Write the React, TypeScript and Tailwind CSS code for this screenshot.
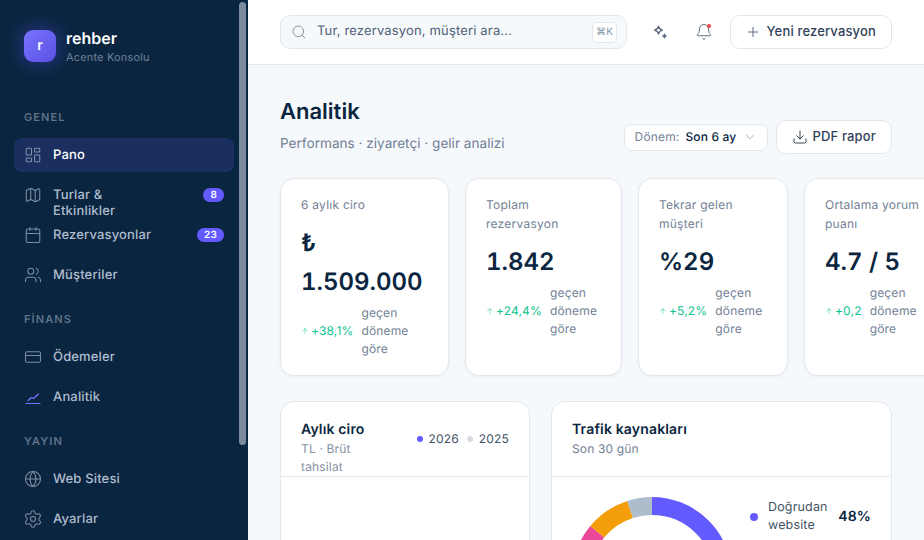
import React from "react";
import {
  LayoutDashboard,
  Map,
  Calendar,
  Users,
  CreditCard,
  Globe,
  Settings,
  Search,
  Bell,
  Plus,
  Download,
  ChevronDown,
  ArrowUp,
} from "lucide-react";

type NavItem = {
  label: string;
  icon: React.ReactNode;
  badge?: string;
  active?: boolean;
};

const iconClass = "w-[18px] h-[18px] shrink-0 text-[#7d8ea3]";

const AnalyticsIcon: React.FC = () => (
  <svg className="w-[18px] h-[18px] shrink-0 text-[#7a73ff]" viewBox="0 0 18 18" fill="none" stroke="currentColor" strokeWidth="1.2" strokeLinecap="round" strokeLinejoin="round">
    <path d="M2 15.5h14" />
    <path d="M4 12.5 7.5 9.5l2 1 5-4.5" />
  </svg>
);

const SparkIcon: React.FC = () => (
  <svg className="w-4 h-4 text-[#5b6b80]" viewBox="0 0 16 16" fill="none" stroke="currentColor" strokeWidth="1.2" strokeLinejoin="round">
    <path d="M6.5 2.2c.5 2.6 1.4 3.5 4 4-2.6.5-3.5 1.4-4 4-.5-2.6-1.4-3.5-4-4 2.6-.5 3.5-1.4 4-4Z" />
    <path d="M12.5 10.2c.2 1.2.6 1.6 1.8 1.8-1.2.2-1.6.6-1.8 1.8-.2-1.2-.6-1.6-1.8-1.8 1.2-.2 1.6-.6 1.8-1.8Z" fill="currentColor" />
  </svg>
);

const sections: { title: string; items: NavItem[] }[] = [
  {
    title: "GENEL",
    items: [
      { label: "Pano", icon: <LayoutDashboard className={iconClass} strokeWidth={1.4} />, active: true },
      { label: "Turlar & Etkinlikler", icon: <Map className={iconClass} strokeWidth={1.4} />, badge: "8" },
      { label: "Rezervasyonlar", icon: <Calendar className={iconClass} strokeWidth={1.4} />, badge: "23" },
      { label: "Müşteriler", icon: <Users className={iconClass} strokeWidth={1.4} /> },
    ],
  },
  {
    title: "FİNANS",
    items: [
      { label: "Ödemeler", icon: <CreditCard className={iconClass} strokeWidth={1.4} /> },
      { label: "Analitik", icon: <AnalyticsIcon /> },
    ],
  },
  {
    title: "YAYIN",
    items: [
      { label: "Web Sitesi", icon: <Globe className={iconClass} strokeWidth={1.4} /> },
      { label: "Ayarlar", icon: <Settings className="w-5 h-5 -mx-px shrink-0 text-[#7d8ea3]" strokeWidth={1.3} /> },
    ],
  },
];

const kpis = [
  { label: "6 aylık ciro", value: "₺ 1.509.000", delta: "+38,1%", width: "w-[169px]" },
  { label: "Toplam rezervasyon", value: "1.842", delta: "+24,4%", width: "w-[157px]" },
  { label: "Tekrar gelen müşteri", value: "%29", delta: "+5,2%", width: "w-[150px]" },
  { label: "Ortalama yorum puanı", value: "4.7 / 5", delta: "+0,2", width: "w-[150px]" },
];

const Sidebar: React.FC = () => (
  <aside className="relative w-[248px] h-full shrink-0 overflow-hidden bg-[#0a2540] px-[14px]">
    <div className="flex items-start gap-[10px] pl-[10px] pt-[30px]">
      <div className="w-8 h-8 rounded-[9px] bg-gradient-to-br from-[#7a73ff] to-[#5a50e0] flex items-center justify-center text-white text-sm font-semibold shadow-[0_0_16px_4px_rgba(99,91,255,0.28)]">
        r
      </div>
      <div className="-mt-[2px]">
        <div className="text-white text-base font-semibold leading-5 tracking-normal">rehber</div>
        <div className="text-[#6f8198] text-[11px] leading-4 mt-px">Acente Konsolu</div>
      </div>
    </div>
    <nav className="mt-[44px]">
      {sections.map((section, i) => (
        <div key={section.title} className={i === 0 ? "" : "mt-[19px]"}>
          <div className="h-4 pl-[10px] mb-[13px] text-[11px] leading-4 font-semibold tracking-[0.1em] text-[#5f7287]">
            {section.title}
          </div>
          <div className="flex flex-col gap-[6px]">
            {section.items.map((item) => (
              <div
                key={item.label}
                className={`h-[34px] w-[220px] rounded-lg pl-[10px] pr-[10px] flex items-center gap-[11px] text-[13px] font-medium ${
                  item.active ? "bg-[#1a2f5f] text-white" : "text-[#aebccd]"
                }`}
              >
                {item.icon}
                <span className="h-4 leading-4 w-[110px] mr-auto">{item.label}</span>
                {item.badge && (
                  <span className="h-[14px] px-[7px] rounded-full bg-[#635bff] text-white text-[10px] leading-[14px] font-semibold">
                    {item.badge}
                  </span>
                )}
              </div>
            ))}
          </div>
        </div>
      ))}
    </nav>
    {/* scrollbar thumb */}
    <div className="absolute right-[2px] top-[2px] w-[7px] h-[443px] rounded-full bg-[#7b8b9d]" />
  </aside>
);

const TopBar: React.FC = () => (
  <header className="h-[65px] shrink-0 bg-white border-b border-[#e3e8ee] px-8 flex items-center justify-between">
    <div className="w-[347px] h-[34px] rounded-[10px] bg-[#f6f9fc] border border-[#e3e8ee] pl-[10px] pr-[9px] flex items-center">
      <Search className="w-4 h-4 text-[#8792a2]" strokeWidth={1.5} />
      <span className="ml-[10px] text-[13px] text-[#4f5f75]">Tur, rezervasyon, müşteri ara...</span>
      <span className="ml-auto w-[25px] h-[21px] rounded-[4px] bg-white border border-[#e3e8ee] text-[10px] leading-[19px] text-center text-[#8792a2] whitespace-nowrap">
        ⌘K
      </span>
    </div>
    <div className="flex items-center gap-2">
      <div className="w-9 h-[34px] flex items-center justify-center">
        <SparkIcon />
      </div>
      <div className="relative w-9 h-[34px] flex items-center justify-center">
        <Bell className="w-[18px] h-[18px] text-[#5b6b80]" strokeWidth={1.3} />
        <span className="absolute right-[11px] top-[9px] w-[4px] h-[4px] rounded-full bg-[#ef4444]" />
      </div>
      <button className="h-[34px] pl-[14px] pr-[15px] rounded-[10px] bg-white border border-[#e3e8ee] flex items-center gap-[6px] text-[13px] font-medium text-[#32425a]">
        <Plus className="w-4 h-4 text-[#5b6b80]" strokeWidth={1.5} />
        Yeni rezervasyon
      </button>
    </div>
  </header>
);

const KpiCard: React.FC<(typeof kpis)[number]> = ({ label, value, delta, width }) => (
  <div className={`${width} h-[198px] shrink-0 bg-white border border-[#e3e8ee] rounded-[14px] shadow-[0_1px_3px_rgba(10,37,64,0.06)] px-5 py-4`}>
    <div className="text-xs leading-[19px] text-[#727f94] tracking-[0.02em]">{label}</div>
    <div className="mt-[9px] text-2xl leading-[39px] font-semibold tabular-nums tracking-normal text-[#0a2540]">{value}</div>
    <div className="mt-[3px] flex items-center gap-2 text-xs leading-[18px]">
      <span className="flex items-center gap-[2px] text-[#0cc48f] whitespace-nowrap">
        <ArrowUp className="w-2 h-2" strokeWidth={1.5} />
        {delta}
      </span>
      <span className="text-[#727f94] w-[50px]">geçen döneme göre</span>
    </div>
  </div>
);

const Donut: React.FC = () => (
  <svg className="w-40 h-40 shrink-0" viewBox="0 0 160 160">
    <g fill="none" strokeWidth="18" transform="rotate(-90 80 80)">
      <circle cx="80" cy="80" r="71" stroke="#635bff" pathLength={100} strokeDasharray="48 52" />
      <circle cx="80" cy="80" r="71" stroke="#0cc48f" pathLength={100} strokeDasharray="20 80" strokeDashoffset={-48} />
      <circle cx="80" cy="80" r="71" stroke="#ec4899" pathLength={100} strokeDasharray="18 82" strokeDashoffset={-68} />
      <circle cx="80" cy="80" r="71" stroke="#f59e0b" pathLength={100} strokeDasharray="9 91" strokeDashoffset={-86} />
      <circle cx="80" cy="80" r="71" stroke="#adbdcc" pathLength={100} strokeDasharray="5 95" strokeDashoffset={-95} />
    </g>
  </svg>
);

const App: React.FC = () => (
  <div className="w-screen h-screen overflow-hidden flex font-['Inter',sans-serif] tracking-[0.01em] bg-[#f6f9fc] [text-rendering:geometricPrecision]">
    <Sidebar />
    <div className="flex-1 min-w-0 h-full flex flex-col overflow-hidden">
      <TopBar />
      <main className="flex-1 min-h-0 overflow-hidden px-8 pt-8">
        <div className="flex items-end justify-between">
          <div>
            <h1 className="text-[22px] leading-[30px] font-semibold tracking-normal text-[#0a2540]">Analitik</h1>
            <p className="mt-[7px] text-[13.6px] leading-5 tracking-normal text-[#727f94]">Performans · ziyaretçi · gelir analizi</p>
          </div>
          <div className="flex items-center gap-2">
            <div className="h-[27px] px-[10px] rounded-lg bg-white border border-[#e3e8ee] flex items-center text-xs">
              <span className="text-[#727f94]">Dönem:</span>
              <span className="ml-[6px] font-medium text-[#0a2540]">Son 6 ay</span>
              <ChevronDown className="ml-[7px] w-[14px] h-[14px] text-[#a3acb9]" strokeWidth={1.5} />
            </div>
            <button className="h-[34px] px-[15px] rounded-[10px] bg-white border border-[#e3e8ee] flex items-center gap-1 text-[13px] font-medium text-[#32425a]">
              <Download className="w-4 h-4" strokeWidth={1.5} />
              PDF rapor
            </button>
          </div>
        </div>

        <div className="mt-6 flex gap-4">
          {kpis.map((kpi) => (
            <KpiCard key={kpi.label} {...kpi} />
          ))}
        </div>

        <div className="mt-[25px] flex gap-[21px] items-start">
          <section className="w-[250px] shrink-0 bg-white border border-[#e3e8ee] rounded-[14px] h-[300px]">
            <div className="h-[75px] border-b border-[#e3e8ee] pl-5 pr-5 pt-[18px] flex justify-between overflow-hidden">
              <div className="w-[80px] shrink-0">
                <div className="text-sm leading-5 font-semibold text-[#0a2540]">Aylık ciro</div>
                <div className="text-xs leading-[18px] text-[#8792a2]">TL · Brüt tahsilat</div>
              </div>
              <div className="h-[19px] mt-[9px] flex items-center text-xs text-[#425466]">
                <span className="w-[6px] h-[6px] rounded-full bg-[#635bff] mr-[6px]" />
                2026
                <span className="w-[6px] h-[6px] rounded-full bg-[#d5dbe1] ml-[8px] mr-[6px]" />
                2025
              </div>
            </div>
          </section>
          <section className="w-[341px] shrink-0 bg-white border border-[#e3e8ee] rounded-[14px] h-[300px]">
            <div className="h-[75px] border-b border-[#e3e8ee] pl-5 pt-[18px]">
              <div className="text-sm leading-5 font-semibold text-[#0a2540]">Trafik kaynakları</div>
              <div className="text-xs leading-[18px] text-[#727f94]">Son 30 gün</div>
            </div>
            <div className="pl-5 pt-5 flex items-start">
              <Donut />
              <div className="ml-[18px] mt-[2px] w-[121px] flex items-center text-[12.5px]">
                <span className="w-2 h-2 rounded-full bg-[#635bff] shrink-0" />
                <span className="ml-[10px] w-[65px] text-[#425466] leading-[18px]">Doğrudan website</span>
                <span className="ml-auto text-sm font-semibold text-[#0a2540]">48%</span>
              </div>
            </div>
          </section>
        </div>
      </main>
    </div>
  </div>
);

export default App;
